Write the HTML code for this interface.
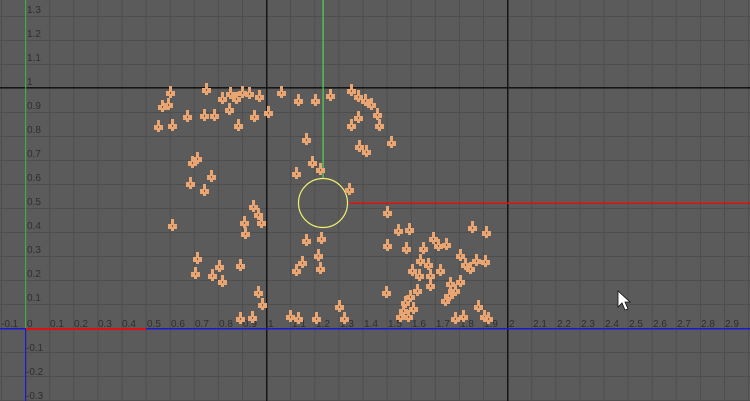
<!DOCTYPE html>
<html><head><meta charset="utf-8"><style>
html,body{margin:0;padding:0}
body{width:750px;height:401px;overflow:hidden;position:relative;background:#5b5b5b;font-family:"Liberation Sans",sans-serif}
svg{position:absolute;left:0;top:0}
.t{font-size:10px;fill:#2e2e2e}
</style></head><body>
<svg width="750" height="401" viewBox="0 0 750 401">
<defs>
<pattern id="g" x="1" y="16" width="24.1" height="24" patternUnits="userSpaceOnUse">
<rect x="0" y="0" width="1" height="24" fill="#4e4e4e"/><rect x="0" y="0" width="24.1" height="1" fill="#4e4e4e"/>
</pattern>
<g id="m"><rect x="-1" y="-6" width="3" height="12" fill="#eaa672"/><rect x="-4" y="-1" width="9" height="5" fill="#eaa672"/><rect x="0" y="0" width="1" height="2" fill="#7a5a46"/></g>
</defs>
<rect width="750" height="401" fill="url(#g)"/>
<rect x="266" y="0" width="1.5" height="401" fill="#151515"/>
<rect x="507" y="0" width="1.5" height="401" fill="#151515"/>
<rect x="0" y="87" width="750" height="1.5" fill="#151515"/>
<rect x="25" y="0" width="1.2" height="328" fill="#3fae3f"/>
<rect x="25" y="328" width="1.2" height="73" fill="#1a1ad0"/>
<rect x="0" y="328" width="750" height="1.5" fill="#1a1ad0"/>
<rect x="26" y="328" width="120" height="2" fill="#e01010"/>
<g class="t">
<text x="1" y="327">-0.1</text><text x="27" y="327">0</text><text x="50" y="327">0.1</text><text x="74" y="327">0.2</text><text x="98" y="327">0.3</text><text x="122" y="327">0.4</text><text x="147" y="327">0.5</text><text x="171" y="327">0.6</text><text x="195" y="327">0.7</text><text x="219" y="327">0.8</text><text x="243" y="327">0.9</text><text x="268" y="327">1</text><text x="292" y="327">1.1</text><text x="316" y="327">1.2</text><text x="340" y="327">1.3</text><text x="364" y="327">1.4</text><text x="388" y="327">1.5</text><text x="412" y="327">1.6</text><text x="436" y="327">1.7</text><text x="460" y="327">1.8</text><text x="484" y="327">1.9</text><text x="509" y="327">2</text><text x="533" y="327">2.1</text><text x="557" y="327">2.2</text><text x="581" y="327">2.3</text><text x="605" y="327">2.4</text><text x="629" y="327">2.5</text><text x="653" y="327">2.6</text><text x="677" y="327">2.7</text><text x="701" y="327">2.8</text><text x="725" y="327">2.9</text>
<text x="27" y="13">1.3</text><text x="27" y="37">1.2</text><text x="27" y="61">1.1</text><text x="27" y="85">1</text><text x="27" y="109">0.9</text><text x="27" y="133">0.8</text><text x="27" y="157">0.7</text><text x="27" y="181">0.6</text><text x="27" y="205">0.5</text><text x="27" y="229">0.4</text><text x="27" y="253">0.3</text><text x="27" y="277">0.2</text><text x="27" y="301">0.1</text><text x="26" y="351">-0.1</text><text x="26" y="375">-0.2</text><text x="26" y="399">-0.3</text>
</g>
<rect x="322.5" y="0" width="1.2" height="179" fill="#4ed84e"/>
<rect x="349" y="202.5" width="401" height="1.5" fill="#e01010"/>
<circle cx="323" cy="203" r="24.5" fill="none" stroke="#f0f070" stroke-width="1.2"/>
<g>
<use href="#m" x="170" y="92"/><use href="#m" x="168" y="104"/><use href="#m" x="206" y="89"/><use href="#m" x="222" y="98"/><use href="#m" x="230" y="93"/><use href="#m" x="236" y="98"/><use href="#m" x="242" y="92"/><use href="#m" x="249" y="93"/><use href="#m" x="259" y="96"/><use href="#m" x="281" y="92"/><use href="#m" x="298" y="100"/><use href="#m" x="315" y="100"/><use href="#m" x="330" y="95"/><use href="#m" x="351" y="90"/><use href="#m" x="358" y="96"/><use href="#m" x="365" y="100"/><use href="#m" x="371" y="104"/><use href="#m" x="162" y="106"/><use href="#m" x="187" y="116"/><use href="#m" x="204" y="115"/><use href="#m" x="214" y="115"/><use href="#m" x="229" y="109"/><use href="#m" x="238" y="125"/><use href="#m" x="254" y="116"/><use href="#m" x="268" y="112"/><use href="#m" x="158" y="126"/><use href="#m" x="172" y="125"/><use href="#m" x="351" y="125"/><use href="#m" x="358" y="117"/><use href="#m" x="377" y="114"/><use href="#m" x="379" y="125"/><use href="#m" x="359" y="146"/><use href="#m" x="366" y="151"/><use href="#m" x="391" y="142"/><use href="#m" x="306" y="139"/><use href="#m" x="312" y="162"/><use href="#m" x="320" y="169"/><use href="#m" x="296" y="173"/><use href="#m" x="349" y="189"/><use href="#m" x="192" y="162"/><use href="#m" x="197" y="158"/><use href="#m" x="190" y="183"/><use href="#m" x="211" y="176"/><use href="#m" x="204" y="190"/><use href="#m" x="172" y="225"/><use href="#m" x="253" y="206"/><use href="#m" x="258" y="214"/><use href="#m" x="244" y="222"/><use href="#m" x="245" y="233"/><use href="#m" x="261" y="222"/><use href="#m" x="387" y="212"/><use href="#m" x="306" y="240"/><use href="#m" x="321" y="238"/><use href="#m" x="387" y="245"/><use href="#m" x="398" y="230"/><use href="#m" x="409" y="229"/><use href="#m" x="433" y="238"/><use href="#m" x="438" y="245"/><use href="#m" x="472" y="227"/><use href="#m" x="486" y="232"/><use href="#m" x="197" y="258"/><use href="#m" x="195" y="273"/><use href="#m" x="212" y="275"/><use href="#m" x="219" y="266"/><use href="#m" x="222" y="281"/><use href="#m" x="240" y="265"/><use href="#m" x="296" y="270"/><use href="#m" x="302" y="262"/><use href="#m" x="318" y="255"/><use href="#m" x="320" y="268"/><use href="#m" x="406" y="248"/><use href="#m" x="423" y="248"/><use href="#m" x="428" y="264"/><use href="#m" x="446" y="244"/><use href="#m" x="460" y="255"/><use href="#m" x="465" y="264"/><use href="#m" x="470" y="268"/><use href="#m" x="476" y="260"/><use href="#m" x="485" y="261"/><use href="#m" x="258" y="292"/><use href="#m" x="262" y="304"/><use href="#m" x="240" y="318"/><use href="#m" x="252" y="317"/><use href="#m" x="290" y="316"/><use href="#m" x="298" y="318"/><use href="#m" x="316" y="318"/><use href="#m" x="339" y="306"/><use href="#m" x="344" y="318"/><use href="#m" x="386" y="292"/><use href="#m" x="400" y="316"/><use href="#m" x="405" y="302"/><use href="#m" x="410" y="296"/><use href="#m" x="417" y="290"/><use href="#m" x="419" y="275"/><use href="#m" x="430" y="275"/><use href="#m" x="440" y="270"/><use href="#m" x="449" y="295"/><use href="#m" x="455" y="290"/><use href="#m" x="460" y="281"/><use href="#m" x="463" y="316"/><use href="#m" x="478" y="306"/><use href="#m" x="484" y="316"/><use href="#m" x="488" y="318"/><use href="#m" x="412" y="270"/><use href="#m" x="420" y="260"/><use href="#m" x="430" y="285"/><use href="#m" x="450" y="283"/><use href="#m" x="455" y="318"/><use href="#m" x="403" y="310"/><use href="#m" x="408" y="316"/><use href="#m" x="413" y="308"/><use href="#m" x="445" y="300"/>
</g>
<path d="M618 291 L618 307 L622 303 L625 310 L628 309 L625 302 L630 302 Z" fill="#fff" stroke="#111" stroke-width="0.8"/>
</svg>
</body></html>
